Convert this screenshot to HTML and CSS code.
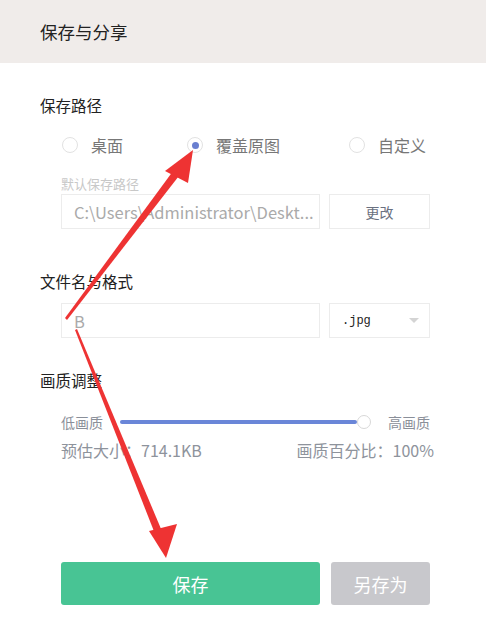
FILE: index.html
```html
<!DOCTYPE html>
<html>
<head>
  <meta charset="utf-8">
  <link rel="stylesheet" href="styles.css">
</head>
<body>
  <div class="dialog">
    <div class="dialog-header">保存与分享</div>

    <div class="section">
      <div class="section-title">保存路径</div>
      <div class="radio-row">
        <label class="radio-item"><span class="radio"></span>桌面</label>
        <label class="radio-item"><span class="radio checked"></span>覆盖原图</label>
        <label class="radio-item"><span class="radio"></span>自定义</label>
      </div>
      <div class="hint">默认保存路径</div>
      <div class="field-row">
        <div class="text-box">C:\Users\Administrator\Deskt...</div>
        <button class="side-button">更改</button>
      </div>
    </div>

    <div class="section section-file">
      <div class="section-title">文件名与格式</div>
      <div class="field-row">
        <div class="text-box">B</div>
        <div class="select-box">
          <span class="select-value">.jpg</span>
          <span class="caret"></span>
        </div>
      </div>
    </div>

    <div class="section section-quality">
      <div class="section-title">画质调整</div>
      <div class="slider-row">
        <span class="slider-label">低画质</span>
        <div class="slider">
          <div class="slider-track"></div>
          <div class="slider-thumb"></div>
        </div>
        <span class="slider-label">高画质</span>
      </div>
      <div class="info-row">
        <span>预估大小：714.1KB</span>
        <span>画质百分比：100%</span>
      </div>
    </div>

    <div class="actions">
      <button class="btn-save">保存</button>
      <button class="btn-saveas">另存为</button>
    </div>
  </div>

  <!-- annotation arrows -->
  <svg class="arrows" width="486" height="622" viewBox="0 0 486 622">
    <polygon points="65,318 67,320 182,172 176,167" fill="#ee3333"/>
    <polygon points="193,150 165,171 188,183" fill="#ee3333"/>
    <polygon points="75,330 77,329 164,536 157,539" fill="#ee3333"/>
    <polygon points="166,558 149,531 177,524" fill="#ee3333"/>
  </svg>
</body>
</html>
```

FILE: styles.css
```css
body {
  margin: 0;
  background: #fff;
  font-family: "Noto Sans CJK SC", "Liberation Sans", sans-serif;
  color: #333;
}

.dialog {
  width: 486px;
  height: 622px;
  display: flex;
  flex-direction: column;
}

.dialog-header {
  height: 63px;
  background: #f0ecea;
  padding-left: 40px;
  display: flex;
  align-items: center;
  font-size: 17.5px;
  color: #222;
}

.section {
  padding-left: 40px;
  margin-top: 32px;
}

.section-title {
  font-size: 15.5px;
  line-height: 20px;
  color: #222;
}

.radio-row {
  display: flex;
  margin-top: 20px;
  padding-left: 22px;
  height: 20px;
}

.radio-item {
  display: flex;
  align-items: center;
  font-size: 16px;
  color: #777;
}

.radio-item:nth-child(1) { width: 125px; }
.radio-item:nth-child(2) { width: 162px; }

.radio {
  width: 16px;
  height: 16px;
  border: 1px solid #e2e2e2;
  border-radius: 50%;
  margin-right: 13px;
  box-sizing: border-box;
  display: flex;
  align-items: center;
  justify-content: center;
}

.radio.checked::after {
  content: "";
  width: 7px;
  height: 7px;
  border-radius: 50%;
  background: #6a7fd0;
}

.hint {
  margin-top: 21px;
  padding-left: 21px;
  font-size: 13px;
  line-height: 16px;
  color: #c8c8c8;
}

.field-row {
  display: flex;
  gap: 9px;
  margin-top: 2px;
  padding-left: 21px;
}

.section-file .field-row {
  margin-top: 12px;
}

.text-box {
  width: 259px;
  height: 35px;
  box-sizing: border-box;
  border: 1px solid #ececec;
  padding-left: 12px;
  display: flex;
  align-items: center;
  font-size: 16.5px;
  color: #aaa;
  white-space: nowrap;
  overflow: hidden;
}

.side-button {
  width: 101px;
  height: 35px;
  border: 1px solid #ececec;
  background: #fff;
  font-family: inherit;
  font-size: 14px;
  color: #6a7080;
}

.select-box {
  width: 101px;
  height: 35px;
  box-sizing: border-box;
  border: 1px solid #ececec;
  display: flex;
  align-items: center;
  justify-content: space-between;
  padding: 0 10px 0 12px;
}

.select-value {
  font-family: "Liberation Mono", monospace;
  font-size: 12px;
  color: #222;
}

.caret {
  width: 0;
  height: 0;
  border-left: 5px solid transparent;
  border-right: 5px solid transparent;
  border-top: 5px solid #d4d4d4;
}

.section-file {
  margin-top: 42px;
}

.section-quality {
  margin-top: 32px;
}

.slider-row {
  display: flex;
  align-items: center;
  margin-top: 22px;
  padding-left: 21px;
  height: 20px;
}

.slider-label {
  font-size: 14px;
  color: #8a8f99;
  width: 42px;
  white-space: nowrap;
}

.slider {
  position: relative;
  width: 251px;
  margin: 0 17px;
  height: 14px;
  display: flex;
  align-items: center;
}

.slider-track {
  width: 237px;
  height: 4px;
  background: #6a86d8;
  border-radius: 2px;
}

.slider-thumb {
  width: 14px;
  height: 14px;
  box-sizing: border-box;
  border: 1px solid #d8d8d8;
  border-radius: 50%;
  background: #fff;
}

.info-row {
  display: flex;
  justify-content: space-between;
  width: 373px;
  margin-top: 8px;
  padding-left: 21px;
  font-size: 16px;
  line-height: 20px;
  color: #8e939c;
}

.actions {
  display: flex;
  gap: 11px;
  padding-left: 61px;
  margin-top: 102px;
}

.actions button {
  height: 43px;
  border: none;
  border-radius: 3px;
  font-family: inherit;
  font-size: 18px;
  color: #fff;
}

.btn-save {
  width: 259px;
  background: #48c494;
}

.btn-saveas {
  width: 99px;
  background: #c8c8cc;
}

.arrows {
  position: absolute;
  left: 0;
  top: 0;
  pointer-events: none;
}
```
